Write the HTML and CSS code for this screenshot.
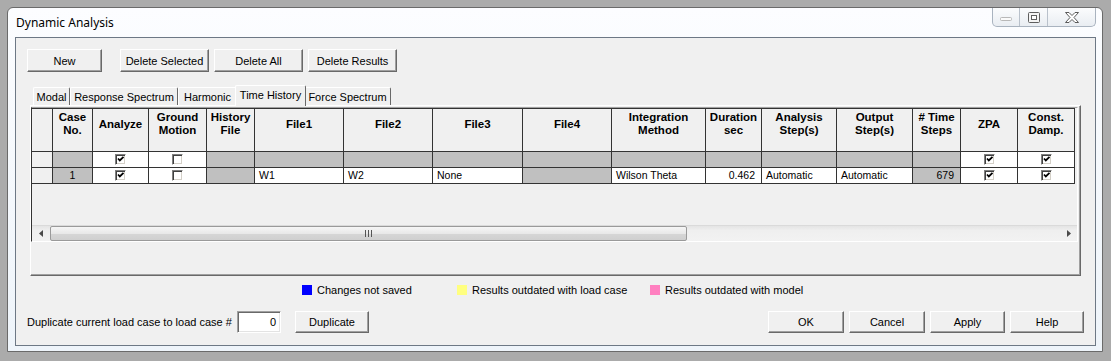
FILE: index.html
```html
<!DOCTYPE html>
<html lang="en">
<head>
  <meta charset="UTF-8">
  <title>Dynamic Analysis</title>
  <link rel="stylesheet" href="styles.css">
</head>
<body>
  <div class="window">
    <!-- Title bar -->
    <div class="titlebar">
      <span class="title">Dynamic Analysis</span>
      <div class="caption-btns">
        <div class="cap cap-min">
          <svg width="12" height="5" viewBox="0 0 12 5"><rect x="0.5" y="0.5" width="11" height="3" rx="1" fill="#fafafa" stroke="#b8b8b8"/></svg>
        </div>
        <div class="cap cap-max">
          <svg width="12" height="11" viewBox="0 0 12 11"><rect x="0.5" y="0.5" width="11" height="10" rx="1" fill="#f4f4f4" stroke="#5e5e5e"/><rect x="3.5" y="3.5" width="5" height="4" fill="#fff" stroke="#5e5e5e"/></svg>
        </div>
        <div class="cap cap-close">
          <svg width="14" height="11" viewBox="0 0 14 11"><path d="M0.5 0.5 H4 L7 3.5 L10 0.5 H13.5 L9 5.5 L13.5 10.5 H10 L7 7.5 L4 10.5 H0.5 L5 5.5 Z" fill="#fff" stroke="#5a5a5a"/></svg>
        </div>
      </div>
    </div>

    <div class="client">
      <!-- Botones superiores -->
      <div class="toolbar">
        <button class="btn btn-new">New</button>
        <button class="btn btn-wide btn-first">Delete Selected</button>
        <button class="btn btn-wide">Delete All</button>
        <button class="btn btn-wide">Delete Results</button>
      </div>

      <!-- Pestañas -->
      <div class="tabs">
        <div class="tab tab-modal">Modal</div>
        <div class="tab tab-response">Response Spectrum</div>
        <div class="tab tab-harmonic">Harmonic</div>
        <div class="tab tab-active">Time History</div>
        <div class="tab tab-force">Force Spectrum</div>
      </div>

      <div class="tab-panel">
        <div class="grid">
          <div class="grid-table">
            <!-- header -->
            <div class="hd"></div>
            <div class="hd">Case<br>No.</div>
            <div class="hd">Analyze</div>
            <div class="hd">Ground<br>Motion</div>
            <div class="hd">History<br>File</div>
            <div class="hd">File1</div>
            <div class="hd">File2</div>
            <div class="hd">File3</div>
            <div class="hd">File4</div>
            <div class="hd">Integration<br>Method</div>
            <div class="hd">Duration<br>sec</div>
            <div class="hd">Analysis<br>Step(s)</div>
            <div class="hd">Output<br>Step(s)</div>
            <div class="hd"># Time<br>Steps</div>
            <div class="hd">ZPA</div>
            <div class="hd">Const.<br>Damp.</div>

            <!-- row: new -->
            <div class="cell rowhd"></div>
            <div class="cell grey"></div>
            <div class="cell chk"><span class="checkbox checked"></span></div>
            <div class="cell chk"><span class="checkbox"></span></div>
            <div class="cell grey"></div>
            <div class="cell grey"></div>
            <div class="cell grey"></div>
            <div class="cell grey"></div>
            <div class="cell grey"></div>
            <div class="cell grey"></div>
            <div class="cell grey"></div>
            <div class="cell grey"></div>
            <div class="cell grey"></div>
            <div class="cell grey"></div>
            <div class="cell chk"><span class="checkbox checked"></span></div>
            <div class="cell chk"><span class="checkbox checked"></span></div>

            <!-- row 1 -->
            <div class="cell rowhd"></div>
            <div class="cell grey center">1</div>
            <div class="cell chk"><span class="checkbox checked"></span></div>
            <div class="cell chk"><span class="checkbox"></span></div>
            <div class="cell grey"></div>
            <div class="cell">W1</div>
            <div class="cell">W2</div>
            <div class="cell">None</div>
            <div class="cell grey"></div>
            <div class="cell">Wilson Theta</div>
            <div class="cell right">0.462</div>
            <div class="cell">Automatic</div>
            <div class="cell">Automatic</div>
            <div class="cell grey right">679</div>
            <div class="cell chk"><span class="checkbox checked"></span></div>
            <div class="cell chk"><span class="checkbox checked"></span></div>
          </div>
          <div class="grid-empty"></div>
          <div class="hscroll">
            <div class="sb-arrow sb-left">
              <svg width="4" height="7" viewBox="0 0 4 7"><path d="M4 0 L0 3.5 L4 7 Z" fill="#4a4a4a"/></svg>
            </div>
            <div class="sb-thumb">
              <svg width="8" height="7" viewBox="0 0 8 7"><path d="M0.5 0 V7 M3.5 0 V7 M6.5 0 V7" stroke="#555" stroke-width="1"/></svg>
            </div>
            <div class="sb-track"></div>
            <div class="sb-arrow sb-right">
              <svg width="4" height="7" viewBox="0 0 4 7"><path d="M0 0 L4 3.5 L0 7 Z" fill="#4a4a4a"/></svg>
            </div>
          </div>
        </div>
      </div>

      <!-- Leyenda -->
      <div class="legend">
        <div class="legend-item item-blue"><span class="swatch blue"></span>Changes not saved</div>
        <div class="legend-item item-yellow"><span class="swatch yellow"></span>Results outdated with load case</div>
        <div class="legend-item"><span class="swatch pink"></span>Results outdated with model</div>
      </div>

      <!-- Parte inferior -->
      <div class="bottom">
        <span class="dup-label">Duplicate current load case to load case #</span>
        <div class="num-input">0</div>
        <button class="btn btn-dup">Duplicate</button>
        <div class="spacer"></div>
        <button class="btn btn-ok">OK</button>
        <button class="btn btn-ok">Cancel</button>
        <button class="btn btn-ok btn-apply">Apply</button>
        <button class="btn btn-ok btn-help">Help</button>
      </div>
    </div>
  </div>
</body>
</html>
```

FILE: styles.css
```css
/* Estilos generales */
body {
  margin: 0;
  background-color: #ababab;
  font-family: "Liberation Sans", Arial, sans-serif;
  font-size: 11px;
  color: #000;
}
.window {
  margin: 7px 0 0 7px;
  width: 1096px;
  height: 345px;
  box-sizing: border-box;
  border: 1px solid #6a6a6a;
  border-radius: 6px 6px 0 0;
  background: linear-gradient(#fcfdff, #eef4fa);
  padding: 0 6px 5px 7px;
  display: flex;
  flex-direction: column;
}
.titlebar {
  height: 29px;
  display: flex;
}
.title {
  font-family: "Noto Sans", sans-serif;
  font-size: 12px;
  padding: 6px 0 0 1px;
  color: #000;
}
.caption-btns {
  margin-left: auto;
  height: 19px;
  display: flex;
  box-sizing: border-box;
  border: 1px solid #a9b3bf;
  border-top: none;
  border-radius: 0 0 5px 5px;
  background: linear-gradient(#fbfcfd, #e9edf2);
}
.cap {
  display: flex;
  align-items: center;
  justify-content: center;
  height: 18px;
}
.cap-min {
  width: 27px;
  border-right: 1px solid #b9c1cb;
  padding-top: 4px;
  box-sizing: border-box;
}
.cap-max {
  width: 27px;
  border-right: 1px solid #b9c1cb;
}
.cap-close {
  width: 47px;
}
.client {
  width: 1081px;
  height: 309px;
  box-sizing: border-box;
  border: 1px solid #6d7885;
  background-color: #f0f0f0;
  display: flex;
  flex-direction: column;
}

/* Botones */
.btn {
  box-sizing: border-box;
  height: 23px;
  padding: 0;
  background-color: #f0f0f0;
  border: 1px solid;
  border-color: #fff #696969 #696969 #fff;
  box-shadow: inset -1px -1px #a0a0a0;
  font-family: "Liberation Sans", Arial, sans-serif;
  font-size: 11px;
  color: #000;
}
.toolbar {
  display: flex;
  margin: 11px 0 0 11px;
}
.btn-new {
  width: 75px;
}
.btn-wide {
  width: 89px;
  margin-left: 5px;
}
.btn-first {
  margin-left: 18px;
}

/* Pestañas */
.tabs {
  display: flex;
  align-items: flex-end;
  height: 20px;
  margin: 13px 0 0 17px;
  position: relative;
  z-index: 1;
}
.tab {
  box-sizing: border-box;
  height: 18px;
  border: 1px solid;
  border-color: #fff #696969 transparent #fff;
  border-bottom: none;
  border-radius: 2px 2px 0 0;
  display: flex;
  align-items: center;
  justify-content: center;
  font-size: 11px;
  background-color: #f0f0f0;
}
.tab-modal { width: 37px; }
.tab-response { width: 108px; }
.tab-harmonic { width: 59px; }
.tab-force { width: 87px; }
.tab-active {
  width: 71px;
  height: 21px;
  margin: 0 -2px -1px;
  padding-bottom: 3px;
  position: relative;
  z-index: 2;
}
.tab-panel {
  margin-left: 14px;
  width: 1051px;
  height: 171px;
  box-sizing: border-box;
  border: 1px solid;
  border-color: #fff #696969 #696969 #fff;
  box-shadow: inset -1px -1px #a0a0a0;
}

/* Tabla */
.grid {
  margin-top: 1px;
  width: 1047px;
  height: 135px;
  box-sizing: border-box;
  border: 1px solid;
  border-color: #a0a0a0 #fff #fff #333;
  display: flex;
  flex-direction: column;
}
.grid-table {
  display: grid;
  grid-template-columns: 21px 40px 56px 58px 48px 89px 89px 90px 89px 94px 56px 75px 76px 48px 57px 57px;
  grid-template-rows: 44px 16px 16px;
}
.hd {
  box-sizing: border-box;
  border-top: 1px solid #333;
  border-right: 1px solid #333;
  border-bottom: 1px solid #333;
  background-color: #f0f0f0;
  font-weight: bold;
  font-size: 11.5px;
  line-height: 13px;
  text-align: center;
  display: flex;
  align-items: center;
  justify-content: center;
  padding-bottom: 12px;
}
.cell {
  box-sizing: border-box;
  border-right: 1px solid #333;
  border-bottom: 1px solid #333;
  background-color: #fff;
  font-size: 10.5px;
  line-height: 15px;
  padding: 0 4px;
  white-space: nowrap;
}
.cell.rowhd {
  background-color: #f0f0f0;
}
.cell.grey {
  background-color: #c0c0c0;
}
.center {
  text-align: center;
}
.right {
  text-align: right;
  padding-right: 6px;
}
.chk {
  display: flex;
  align-items: center;
  justify-content: center;
}
.checkbox {
  display: block;
  width: 11px;
  height: 11px;
  box-sizing: border-box;
  border: 1px solid;
  border-color: #808080 #fff #fff #808080;
  box-shadow: inset 1px 1px #404040, inset -1px -1px #d4d0c8;
  background-color: #fff;
}
.checkbox.checked {
  background-image: url("data:image/svg+xml,%3Csvg xmlns='http://www.w3.org/2000/svg' width='9' height='9'%3E%3Cpath d='M2 3.5 L3.8 5.5 L7.5 1.8' fill='none' stroke='%23000' stroke-width='1.8'/%3E%3C/svg%3E");
  background-repeat: no-repeat;
  background-position: 0 0;
}
.grid-empty {
  height: 41px;
}

/* Barra de desplazamiento */
.hscroll {
  display: flex;
  height: 16px;
  background: linear-gradient(#e4e4e4, #efefef 30%, #f2f2f2);
  border-top: 1px solid #dadada;
  box-sizing: border-box;
}
.sb-arrow {
  display: flex;
  align-items: center;
  justify-content: center;
}
.sb-left {
  width: 18px;
}
.sb-right {
  width: 17px;
}
.sb-thumb {
  width: 637px;
  box-sizing: border-box;
  border: 1px solid #9a9a9a;
  border-radius: 2px;
  background: linear-gradient(#f6f6f6, #e8e8e8 50%, #d6d6d6 51%, #cfcfcf);
  display: flex;
  align-items: center;
  justify-content: center;
}
.sb-track {
  flex: 1;
}

/* Leyenda */
.legend {
  display: flex;
  align-items: center;
  height: 14px;
  margin: 7px 0 0 286px;
}
.legend-item {
  display: flex;
  align-items: center;
}
.item-blue { width: 155px; }
.item-yellow { width: 193px; }
.swatch {
  display: block;
  width: 10px;
  height: 10px;
  margin-right: 5px;
}
.blue { background-color: #0000ff; }
.yellow { background-color: #ffff80; }
.pink { background-color: #ff80c0; }

/* Parte inferior */
.bottom {
  display: flex;
  align-items: center;
  height: 22px;
  margin: 14px 11px 0 11px;
}
.dup-label {
  width: 210px;
}
.num-input {
  width: 44px;
  height: 22px;
  box-sizing: border-box;
  border: 1px solid;
  border-color: #a0a0a0 #fff #fff #a0a0a0;
  box-shadow: inset 1px 1px #696969, inset -1px -1px #e3e3e3;
  background-color: #fff;
  text-align: right;
  padding-right: 4px;
  line-height: 20px;
}
.btn-dup {
  width: 74px;
  height: 22px;
  margin-left: 14px;
}
.spacer {
  flex: 1;
}
.btn-ok {
  width: 76px;
  height: 22px;
  margin-left: 5px;
}
.btn-apply {
  width: 75px;
}
.btn-help {
  width: 74px;
}
```
